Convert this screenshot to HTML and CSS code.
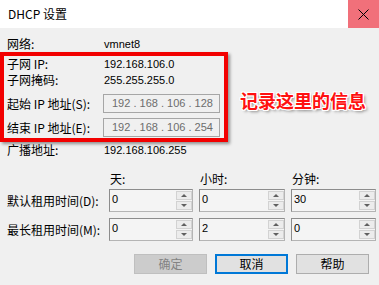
FILE: index.html
```html
<!DOCTYPE html>
<html lang="zh-CN">
<head>
    <meta charset="UTF-8">
    <title>DHCP 设置</title>
    <link rel="stylesheet" href="styles.css">
</head>
<body>
    <div class="window">
        <div class="titlebar">
            <span class="title">DHCP 设置</span>
            <button class="close">
                <svg width="11" height="11" viewBox="0 0 11 11">
                    <path d="M0.5 0.5 L10.5 10.5 M10.5 0.5 L0.5 10.5" stroke="#000" stroke-width="1" fill="none"/>
                </svg>
            </button>
        </div>
        <div class="content">
            <div class="row">
                <span class="label">网络:</span>
                <span class="value">vmnet8</span>
            </div>

            <div class="marked">
                <div class="redbox">
                    <div class="row short">
                        <span class="label">子网 IP:</span>
                        <span class="value">192.168.106.0</span>
                    </div>
                    <div class="row tall">
                        <span class="label">子网掩码:</span>
                        <span class="value">255.255.255.0</span>
                    </div>
                    <div class="row field first">
                        <span class="label">起始 IP 地址(S):</span>
                        <span class="ipbox">192 . 168 . 106 . 128</span>
                    </div>
                    <div class="row field">
                        <span class="label">结束 IP 地址(E):</span>
                        <span class="ipbox">192 . 168 . 106 . 254</span>
                    </div>
                </div>
                <div class="note">记录这里的信息</div>
            </div>

            <div class="row">
                <span class="label">广播地址:</span>
                <span class="value">192.168.106.255</span>
            </div>

            <div class="lease">
                <span></span>
                <span class="head">天:</span>
                <span class="head">小时:</span>
                <span class="head">分钟:</span>

                <span class="rowlabel">默认租用时间(D):</span>
                <div class="spin"><span class="num">0</span><span class="arrows"><i class="up"></i><i class="down"></i></span></div>
                <div class="spin"><span class="num">0</span><span class="arrows"><i class="up"></i><i class="down"></i></span></div>
                <div class="spin"><span class="num">30</span><span class="arrows"><i class="up"></i><i class="down"></i></span></div>

                <span class="rowlabel">最长租用时间(M):</span>
                <div class="spin"><span class="num">0</span><span class="arrows"><i class="up"></i><i class="down"></i></span></div>
                <div class="spin"><span class="num">2</span><span class="arrows"><i class="up"></i><i class="down"></i></span></div>
                <div class="spin"><span class="num">0</span><span class="arrows"><i class="up"></i><i class="down"></i></span></div>
            </div>

            <div class="actions">
                <button class="btn disabled">确定</button>
                <button class="btn focused">取消</button>
                <button class="btn">帮助</button>
            </div>
        </div>
    </div>
</body>
</html>
```

FILE: styles.css
```css
* {
    box-sizing: border-box;
    margin: 0;
    padding: 0;
}

html, body {
    width: 379px;
    height: 285px;
    overflow: hidden;
    background-color: #f0f0f0;
}

body {
    font-family: "Noto Sans CJK SC", "Liberation Sans", sans-serif;
    font-size: 12px;
    color: #000;
}

.window {
    width: 379px;
    height: 285px;
    display: flex;
    flex-direction: column;
}

/* title bar */
.titlebar {
    height: 28px;
    background-color: #fff;
    display: flex;
    align-items: center;
    justify-content: space-between;
}

.title {
    padding-left: 8px;
    font-size: 12px;
    line-height: 28px;
}

.close {
    width: 31px;
    height: 28px;
    border: none;
    background-color: #f1707a;
    display: flex;
    align-items: center;
    justify-content: center;
}

/* body */
.content {
    flex-grow: 1;
    padding-top: 8px;
}

.row {
    display: flex;
    align-items: center;
    height: 16px;
    padding-left: 7px;
}

.label {
    width: 96px;
    flex-shrink: 0;
    line-height: 16px;
}

.value {
    font-family: "Liberation Sans", sans-serif;
    font-size: 11px;
    padding-left: 1px;
}

/* annotated block */
.marked {
    display: flex;
    align-items: flex-start;
}

.redbox {
    width: 228px;
    border: 4px solid #f20000;
    box-shadow: 2px 2px 3px rgba(0, 0, 0, 0.4);
    padding-bottom: 1px;
}

.redbox .row {
    padding-left: 3px;
}

.redbox .row.short {
    height: 15px;
}

.redbox .row.tall {
    height: 18px;
}

.redbox .row.field {
    height: 19px;
    margin-top: 5px;
}

.ipbox {
    width: 117px;
    height: 19px;
    border: 1px solid #a6a6a6;
    background-color: #f0f0f0;
    color: #6d6d6d;
    font-family: "Liberation Sans", sans-serif;
    font-size: 11px;
    line-height: 17px;
    padding-left: 8px;
}

.note {
    margin-left: 12px;
    margin-top: 37px;
    font-size: 18px;
    line-height: 22px;
    font-weight: 700;
    color: #ff1010;
    text-shadow:
        1px 0 0 #fff, -1px 0 0 #fff, 0 1px 0 #fff, 0 -1px 0 #fff,
        1px 1px 0 #fff, -1px -1px 0 #fff, 1px -1px 0 #fff, -1px 1px 0 #fff,
        2px 2px 3px rgba(0, 0, 0, 0.45);
}

/* lease times */
.lease {
    display: grid;
    grid-template-columns: 96px 84px 86px 85px;
    grid-template-rows: 18px 29px 23px;
    column-gap: 6px;
    padding-left: 7px;
    margin-top: 13px;
}

.head {
    line-height: 16px;
    padding-left: 1px;
}

.rowlabel {
    line-height: 23px;
    white-space: nowrap;
}

.spin {
    height: 23px;
    display: flex;
    border: 1px solid #8c8c8c;
    border-right-color: #b4b4b4;
    border-bottom-color: #b4b4b4;
    background-color: #f4f4f4;
}

.num {
    flex-grow: 1;
    font-family: "Liberation Sans", sans-serif;
    font-size: 11px;
    line-height: 18px;
    padding-left: 2px;
}

.arrows {
    width: 16px;
    display: flex;
    flex-direction: column;
    gap: 1px;
    padding: 1px 0 1px 0;
}

.arrows i {
    flex-grow: 1;
    border: 1px solid #d2d2d2;
    background-color: #ececec;
    display: flex;
    align-items: center;
    justify-content: center;
}

.arrows i::before {
    content: "";
    border-left: 3px solid transparent;
    border-right: 3px solid transparent;
}

.arrows .up::before {
    border-bottom: 3px solid #606060;
}

.arrows .down::before {
    border-top: 3px solid #606060;
}

/* buttons */
.actions {
    display: flex;
    justify-content: flex-end;
    gap: 8px;
    padding-right: 10px;
    margin-top: 13px;
}

.btn {
    width: 73px;
    height: 20px;
    font-family: "Noto Sans CJK SC", sans-serif;
    font-size: 12px;
    line-height: 16px;
    background-color: #e1e1e1;
    border: 1px solid #adadad;
    color: #000;
}

.btn.disabled {
    background-color: #cccccc;
    border-color: #bfbfbf;
    color: #838383;
}

.btn.focused {
    border: 2px solid #0078d7;
}
```
